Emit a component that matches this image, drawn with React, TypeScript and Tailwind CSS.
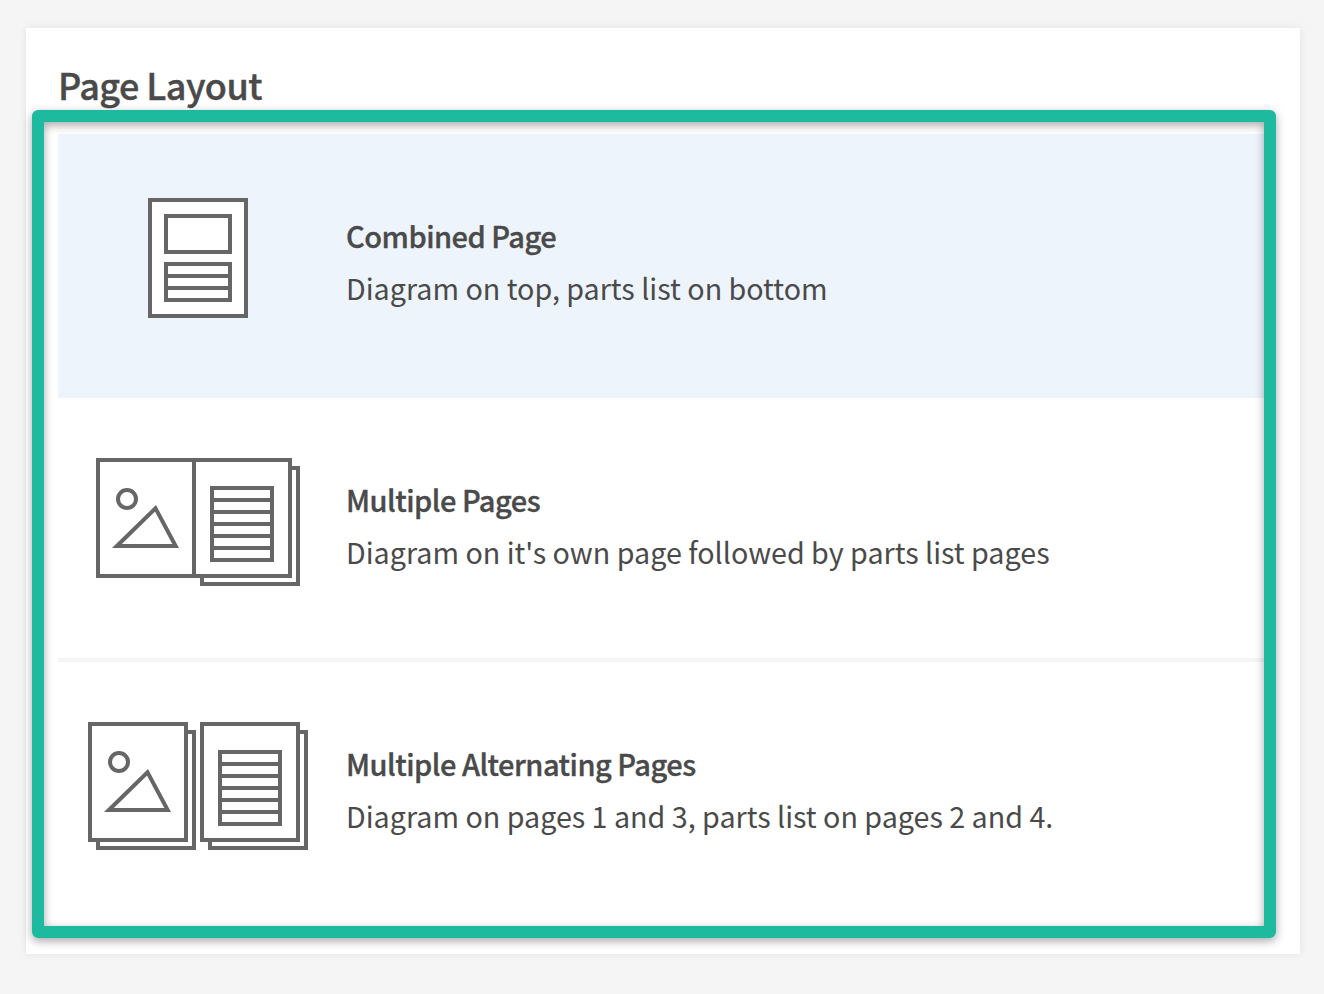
import React from 'react';

const font = { sans: 'font-["Noto_Sans_CJK_SC","Noto_Sans",sans-serif]' };

function CombinedIcon() {
  return (
    <svg width="100" height="120" viewBox="0 0 100 120" fill="none" stroke="#666" strokeWidth="4">
      <rect x="2" y="2" width="96" height="116" fill="#fff" />
      <rect x="18" y="18" width="64" height="36" />
      <rect x="18" y="66" width="64" height="36" />
      <path d="M18 78H82M18 90H82" />
    </svg>
  );
}

function Picture({ cy }: { cy: number }) {
  return (
    <>
      <circle cx="31" cy={cy} r="9" />
      <path d="M20.900 88L59.500 50.300L79.660 88Z" strokeMiterlimit="10" />
    </>
  );
}

function TableLines({ x, y }: { x: number; y: number }) {
  return (
    <g transform={`translate(${x} ${y})`}>
      <rect x="2" y="2" width="60" height="72" />
      <path d="M2 14H62M2 26H62M2 38H62M2 50H62M2 62H62" />
    </g>
  );
}

function MultipleIcon() {
  return (
    <svg width="204" height="128" viewBox="0 0 204 128" fill="none" stroke="#666" strokeWidth="4">
      <path d="M194 10H202V126H106V118" />
      <rect x="2" y="2" width="96" height="116" />
      <rect x="98" y="2" width="96" height="116" />
      <Picture cy={41} />
      <TableLines x={114} y={28} />
    </svg>
  );
}

function AlternatingIcon() {
  return (
    <svg width="220" height="128" viewBox="0 0 220 128" fill="none" stroke="#666" strokeWidth="4">
      <path d="M98 10H106V126H10V118" />
      <rect x="2" y="2" width="96" height="116" />
      <Picture cy={40} />
      <path d="M210 10H218V126H122V118" />
      <rect x="114" y="2" width="96" height="116" />
      <TableLines x={130} y={28} />
    </svg>
  );
}

const layouts = [
  {
    title: 'Combined Page',
    text: 'Diagram on top, parts list on bottom',
    icon: <CombinedIcon />,
    selected: true,
  },
  {
    title: 'Multiple Pages',
    text: "Diagram on it's own page followed by parts list pages",
    icon: <MultipleIcon />,
    divider: true,
  },
  {
    title: 'Multiple Alternating Pages',
    text: 'Diagram on pages 1 and 3, parts list on pages 2 and 4.',
    icon: <AlternatingIcon />,
  },
];

export default function App() {
  return (
    <div className={`min-h-[994px] bg-[#f5f5f5] pl-[26px] pr-[24px] pt-[28px] text-[#4a4a4a] ${font.sans}`}>
      <div className="h-[926px] bg-white pl-[18px] pr-[36px] shadow-[0_0_8px_rgba(0,0,0,0.08)]">
        <h2 className="h-[94px] pt-[32px] pl-[14px] text-[36px] leading-[48px] font-medium tracking-[-0.55px] [-webkit-text-stroke:0.4px_#4a4a4a]">Page Layout</h2>
        <div className="relative h-[804px] pt-[12px] pl-[14px]">
          <div className="flex flex-col">
            {layouts.map((item) => (
              <div
                key={item.title}
                className={`flex h-[264px] items-center border-b-[4px] ${item.selected ? 'bg-[#edf4fb] border-transparent' : item.divider ? 'border-[#f5f5f5]' : 'border-transparent'}`}
              >
                <div className="flex w-[280px] shrink-0 justify-center pb-[12px]">{item.icon}</div>
                <div className="pl-[8px] pb-[6px]">
                  <h3 className="text-[29px] leading-[40px] font-medium tracking-[-0.5px] [-webkit-text-stroke:0.35px_#4a4a4a]">{item.title}</h3>
                  <p className="mt-[13px] text-[28.68px] leading-[40px]">{item.text}</p>
                </div>
              </div>
            ))}
          </div>
          <div className="pointer-events-none absolute -inset-[12px] rounded-[6px] border-[12px] border-[#1dba9f] shadow-[0_3px_10px_rgba(0,0,0,0.35),inset_0_3px_10px_rgba(0,0,0,0.35)]" />
        </div>
      </div>
    </div>
  );
}
